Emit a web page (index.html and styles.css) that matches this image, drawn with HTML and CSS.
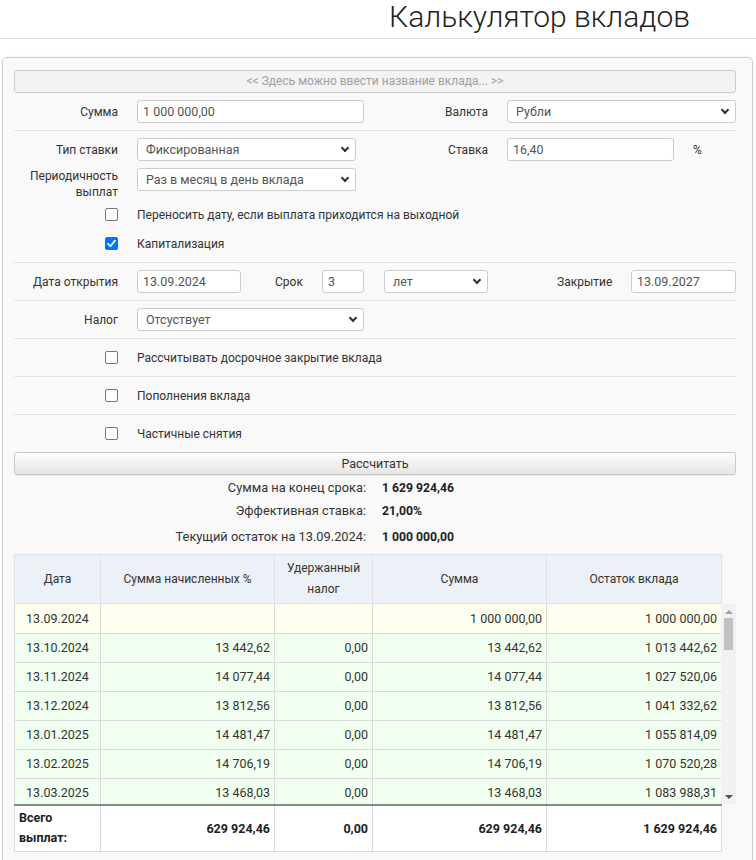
FILE: index.html
```html
<!DOCTYPE html>
<html lang="ru">
<head>
<meta charset="utf-8">
<title>Калькулятор вкладов</title>
<link rel="stylesheet" href="styles.css">
</head>
<body>
<header class="page-head">
  <h1 class="title">Калькулятор вкладов</h1>
</header>
<main class="panel">
  <div class="name-box">&lt;&lt; Здесь можно ввести название вклада... &gt;&gt;</div>

  <section class="block">
    <div class="row">
      <label class="lbl">Сумма</label>
      <div class="field w227">1 000 000,00</div>
      <label class="lbl-mid w124">Валюта</label>
      <div class="field sel w229">Рубли<span class="chev"></span></div>
    </div>
  </section>

  <section class="block block-2">
    <div class="row row-gap">
      <label class="lbl">Тип ставки</label>
      <div class="field sel w219">Фиксированная<span class="chev"></span></div>
      <label class="lbl-mid w132">Ставка</label>
      <div class="field w167">16,40</div>
      <span class="pct">%</span>
    </div>
    <div class="row row-tall">
      <label class="lbl lbl-two">Периодичность выплат</label>
      <div class="field sel w219">Раз в месяц в день вклада<span class="chev"></span></div>
    </div>
    <div class="row check-row">
      <span class="cb"></span>
      <span class="cb-text">Переносить дату, если выплата приходится на выходной</span>
    </div>
    <div class="row check-row">
      <span class="cb cb-on"><svg viewBox="0 0 13 13" width="13" height="13"><path d="M3 6.8 L5.4 9.2 L10 3.6" fill="none" stroke="#fff" stroke-width="1.8" stroke-linecap="round" stroke-linejoin="round"/></svg></span>
      <span class="cb-text">Капитализация</span>
    </div>
  </section>

  <section class="block">
    <div class="row">
      <label class="lbl">Дата открытия</label>
      <div class="field w104">13.09.2024</div>
      <label class="lbl-srok">Срок</label>
      <div class="field w42">3</div>
      <div class="field sel w104 ml20">лет<span class="chev"></span></div>
      <label class="lbl-close">Закрытие</label>
      <div class="field w105">13.09.2027</div>
    </div>
  </section>

  <section class="block">
    <div class="row">
      <label class="lbl">Налог</label>
      <div class="field sel w227">Отсуствует<span class="chev"></span></div>
    </div>
  </section>

  <section class="block">
    <div class="row check-line">
      <span class="cb"></span>
      <span class="cb-text">Рассчитывать досрочное закрытие вклада</span>
    </div>
  </section>
  <section class="block">
    <div class="row check-line">
      <span class="cb"></span>
      <span class="cb-text">Пополнения вклада</span>
    </div>
  </section>
  <section class="block last">
    <div class="row check-line">
      <span class="cb"></span>
      <span class="cb-text">Частичные снятия</span>
    </div>
  </section>

  <div class="btn">Рассчитать</div>

  <div class="results">
    <div class="res-row"><span class="res-lbl">Сумма на конец срока:</span><b class="res-val">1 629 924,46</b></div>
    <div class="res-row"><span class="res-lbl">Эффективная ставка:</span><b class="res-val">21,00%</b></div>
    <div class="res-row res-third"><span class="res-lbl">Текущий остаток на 13.09.2024:</span><b class="res-val">1 000 000,00</b></div>
  </div>

  <div class="grid">
    <table class="tbl thead-tbl">
      <colgroup><col class="c1"><col class="c2"><col class="c3"><col class="c4"><col class="c5"></colgroup>
      <tr>
        <th>Дата</th>
        <th>Сумма начисленных %</th>
        <th>Удержанный<br>налог</th>
        <th>Сумма</th>
        <th>Остаток вклада</th>
      </tr>
    </table>
    <div class="body-wrap">
      <div class="body-scroll">
        <table class="tbl tbody-tbl">
          <colgroup><col class="c1"><col class="c2"><col class="c3"><col class="c4"><col class="c5"></colgroup>
          <tr class="first"><td class="d">13.09.2024</td><td></td><td></td><td>1 000 000,00</td><td>1 000 000,00</td></tr>
          <tr><td class="d">13.10.2024</td><td>13 442,62</td><td>0,00</td><td>13 442,62</td><td>1 013 442,62</td></tr>
          <tr><td class="d">13.11.2024</td><td>14 077,44</td><td>0,00</td><td>14 077,44</td><td>1 027 520,06</td></tr>
          <tr><td class="d">13.12.2024</td><td>13 812,56</td><td>0,00</td><td>13 812,56</td><td>1 041 332,62</td></tr>
          <tr><td class="d">13.01.2025</td><td>14 481,47</td><td>0,00</td><td>14 481,47</td><td>1 055 814,09</td></tr>
          <tr><td class="d">13.02.2025</td><td>14 706,19</td><td>0,00</td><td>14 706,19</td><td>1 070 520,28</td></tr>
          <tr><td class="d">13.03.2025</td><td>13 468,03</td><td>0,00</td><td>13 468,03</td><td>1 083 988,31</td></tr>
        </table>
      </div>
      <div class="sbar">
        <span class="arr arr-up"></span>
        <span class="thumb"></span>
        <span class="track"></span>
        <span class="arr arr-down"></span>
      </div>
    </div>
    <table class="tbl tfoot-tbl">
      <colgroup><col class="c1"><col class="c2"><col class="c3"><col class="c4"><col class="c5"></colgroup>
      <tr>
        <td class="tot-lbl">Всего<br>выплат:</td>
        <td>629 924,46</td>
        <td>0,00</td>
        <td>629 924,46</td>
        <td>1 629 924,46</td>
      </tr>
    </table>
  </div>
</main>
</body>
</html>
```

FILE: styles.css
```css
* { box-sizing: border-box; }
html, body { margin: 0; padding: 0; background: #fff; }
body {
  font-family: Roboto, "Liberation Sans", sans-serif;
  font-size: 12px;
  color: #333;
  width: 756px;
  height: 860px;
  overflow: hidden;
}
.page-head {
  height: 39px;
  border-bottom: 1px solid #ddd;
  padding-left: 389px;
}
.title {
  margin: 0;
  font-size: 30px;
  font-weight: 300;
  line-height: 34px;
  color: #222;
  white-space: nowrap;
}
.panel {
  margin: 18px 3px 0 2px;
  border: 1px solid #cfcfcf;
  border-radius: 5px;
  background: #f9f9f9;
  box-shadow: 0 0 3px rgba(0,0,0,0.08);
  padding: 12px 16px 30px 11px;
}
.name-box {
  height: 23px;
  border: 1px solid #ccc;
  border-radius: 3px;
  background: #f3f3f3;
  color: #a0a0a0;
  text-align: center;
  line-height: 21px;
  font-size: 12px;
}
.block {
  padding: 7px 0;
  border-bottom: 1px solid #e3e3e3;
}
.block.last { border-bottom: 0; }
.block-2 { padding-bottom: 4px; }
.row {
  display: flex;
  align-items: center;
}
.row-gap { margin-bottom: 7px; }
.row-tall { align-items: flex-start; }
.lbl {
  width: 104px;
  margin-right: 19px;
  text-align: right;
  flex: none;
}
.lbl-two {
  line-height: 16px;
  height: 32px;
}
.lbl-mid {
  text-align: right;
  margin-right: 19px;
  flex: none;
}
.w124 { width: 124px; }
.w132 { width: 132px; }
.field {
  height: 23px;
  border: 1px solid #ccc;
  border-radius: 3px;
  background: #fff;
  padding: 0 5px;
  line-height: 21px;
  font-size: 12.5px;
  color: #555;
  flex: none;
  position: relative;
  white-space: nowrap;
}
.sel { padding-left: 8px; }
.chev {
  position: absolute;
  right: 7px;
  top: 6px;
  width: 6px;
  height: 6px;
  border-right: 2px solid #333;
  border-bottom: 2px solid #333;
  transform: rotate(45deg);
}
.w227 { width: 227px; }
.w229 { width: 229px; }
.w219 { width: 219px; }
.w167 { width: 167px; }
.w104 { width: 104px; }
.w105 { width: 105px; }
.w42 { width: 42px; }
.ml20 { margin-left: 20px; }
.pct { margin-left: 19px; }
.lbl-srok { margin-left: 34px; margin-right: 18px; width: 29px; text-align: left; flex: none; }
.lbl-close { margin-left: 69px; margin-right: 19px; width: 55px; text-align: right; flex: none; }
.check-row { height: 29px; }
.check-line { height: 23px; }
.cb {
  width: 13px;
  height: 13px;
  margin-left: 91px;
  margin-right: 19px;
  border: 1px solid #767676;
  border-radius: 2px;
  background: #fff;
  flex: none;
  display: flex;
}
.cb-on { background: #0075ff; border-color: #0075ff; }
.cb-on svg { margin: -1px; }
.btn {
  height: 23px;
  border: 1px solid #c8c8c8;
  border-radius: 3px;
  background: linear-gradient(#fdfdfd, #e6e6e6);
  text-align: center;
  line-height: 21px;
  font-size: 12.5px;
  color: #333;
  box-shadow: 0 1px 1px rgba(0,0,0,0.06);
}
.results { padding-top: 1px; font-size: 12.8px; }
.res-row {
  display: flex;
  height: 23px;
  align-items: center;
}
.res-third { margin-top: 3px; }
.res-lbl {
  width: 352px;
  text-align: right;
  margin-right: 16px;
}
.res-val { font-weight: 700; color: #222; font-size: 12.2px; }
.grid {
  margin-top: 6px;
  width: 722px;
}
.tbl {
  border-collapse: collapse;
  table-layout: fixed;
  width: 707px;
}
.c1 { width: 86px; }
.c2 { width: 174px; }
.c3 { width: 98px; }
.c4 { width: 174px; }
.c5 { width: 175px; }
.thead-tbl th {
  background: #ebf1f6;
  font-weight: 400;
  height: 49px;
  line-height: 21px;
  border: 1px solid #dde3e8;
  padding: 0 4px;
  color: #333;
  font-size: 12px;
}
.body-wrap {
  display: flex;
  height: 200px;
}
.body-scroll {
  width: 707px;
  height: 200px;
  overflow: hidden;
  flex: none;
}
.tbody-tbl td {
  height: 29px;
  border: 1px solid #dadada;
  background: #f0fff0;
  text-align: right;
  padding: 0 4px;
  color: #333;
  font-size: 12.5px;
}
.tbody-tbl tr.first td { background: #fffff0; border-top: 0; }
.tbody-tbl td.d { text-align: center; }
.sbar {
  width: 15px;
  height: 200px;
  background: #f1f1f1;
  display: flex;
  flex-direction: column;
  align-items: center;
  flex: none;
}
.arr {
  width: 0;
  height: 0;
  border-left: 4px solid transparent;
  border-right: 4px solid transparent;
  flex: none;
}
.arr-up { border-bottom: 4px solid #a3a3a3; margin-top: 6px; }
.arr-down { border-top: 4px solid #505050; margin-bottom: 5px; }
.thumb {
  width: 9px;
  height: 32px;
  background: #c1c1c1;
  margin-top: 4px;
  flex: none;
}
.track { flex: 1; }
.tfoot-tbl {
  border-top: 2px solid #8a8a8a;
}
.tfoot-tbl td {
  height: 46px;
  background: #fff;
  border: 1px solid #dadada;
  border-top: 0;
  text-align: right;
  font-weight: 700;
  padding: 0 4px;
  color: #222;
  font-size: 12.5px;
}
.tfoot-tbl td.tot-lbl {
  text-align: left;
  line-height: 20px;
  padding-left: 4px;
}
```
